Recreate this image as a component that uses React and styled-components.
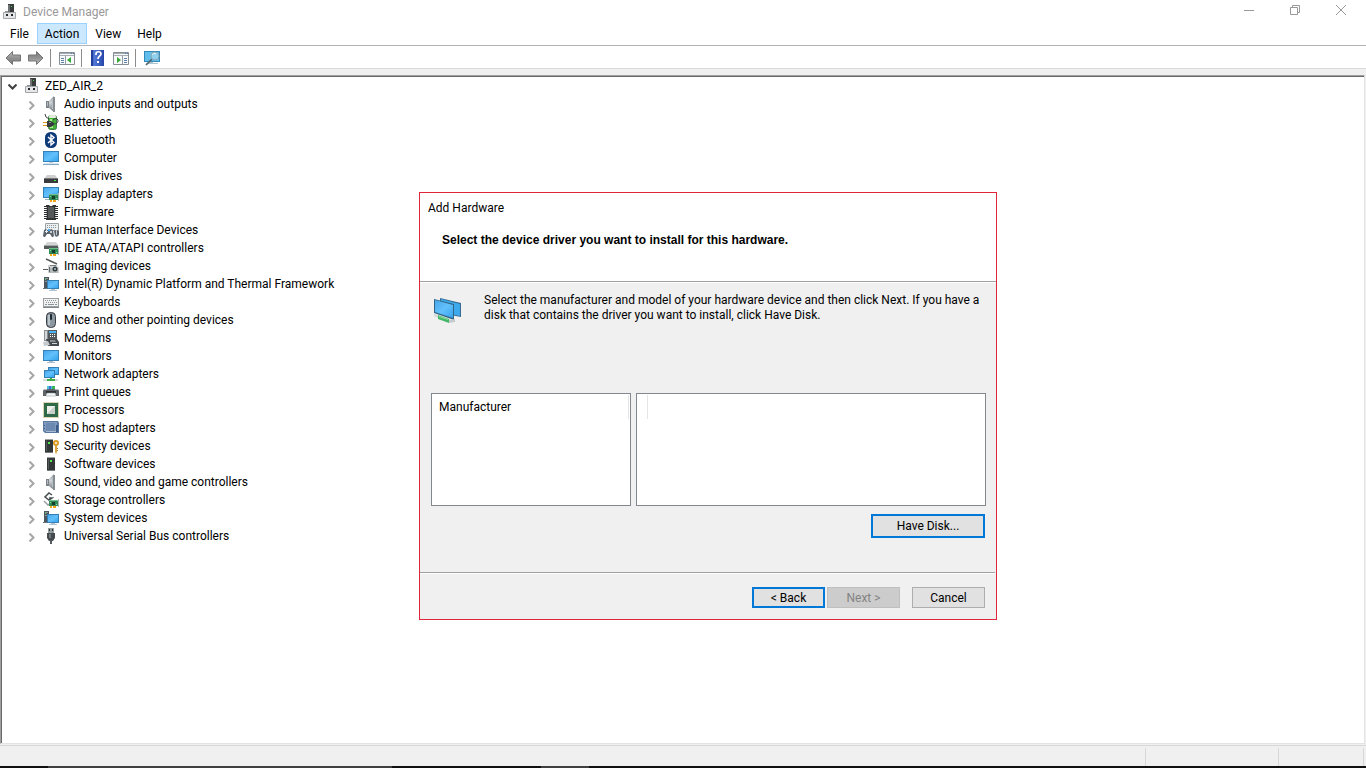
import React, { useState } from "react";
import styled, { createGlobalStyle } from "styled-components";

const GlobalStyle = createGlobalStyle`
  * {
    box-sizing: border-box;
  }

  body {
    margin: 0;
    overflow: hidden;
    background: #fff;
    color: #000;
    font-family: Roboto, "Open Sans", sans-serif;
    font-size: 12px;
    line-height: 16px;
  }

  button {
    font: inherit;
    color: inherit;
  }

  svg {
    flex: none;
  }
`;

const Window = styled.div`
  display: flex;
  flex-direction: column;
  height: 100vh;
  background: #f0f0f0;
`;

const TitleBar = styled.header`
  display: flex;
  align-items: center;
  height: 23px;
  padding-left: 3px;
  background: #fff;
`;

const WindowTitle = styled.h1`
  flex: 1;
  margin: 0 0 0 5px;
  font-size: 12px;
  font-weight: 400;
  color: #999;
`;

const CaptionButton = styled.button`
  display: flex;
  align-items: center;
  justify-content: center;
  width: 46px;
  height: 20px;
  padding: 0;
  border: none;
  background: none;
`;

const CaptionButtons = styled.div`
  display: flex;
  align-self: flex-start;
  margin-right: 2px;
`;

const MenuBar = styled.nav`
  display: flex;
  height: 23px;
  padding: 0 2px 1px;
  border-bottom: 1px solid #b2b2b5;
  background: #fff;
`;

const MenuButton = styled.button`
  padding: 0 7px;
  border: 1px solid ${(props) => (props.$active ? "#99d1ff" : "transparent")};
  background: ${(props) => (props.$active ? "#cce8ff" : "none")};
  line-height: 20px;
`;

const ToolBar = styled.div`
  display: flex;
  align-items: center;
  height: 23px;
  padding: 1px 0 0 1px;
  border-bottom: 1px solid #dadada;
  background: #fff;
`;

const ToolButton = styled.button`
  display: flex;
  align-items: center;
  justify-content: center;
  width: 23px;
  height: 20px;
  padding: 0;
  border: none;
  background: none;
`;

const ToolDivider = styled.span`
  width: 1px;
  height: 18px;
  margin: 0 4px 0 3px;
  background: #8d8d8d;
`;

const TreePane = styled.main`
  flex: 1;
  min-height: 0;
  margin: 6px 1px 1px 0;
  border: 1px solid #e3e3e3;
  border-top-color: #a0a0a0;
  border-left-color: #a0a0a0;
  background: #fff;
  box-shadow: inset 1px 1px 0 #696969;
`;

const Tree = styled.ul`
  margin: 0;
  padding: 1px 0 0;
  list-style: none;
`;

const Branch = styled.ul`
  margin: 0;
  padding: 0 0 0 20px;
  list-style: none;
`;

const TreeRow = styled.div`
  display: flex;
  align-items: center;
  height: 18px;
`;

const Toggle = styled.button`
  display: flex;
  align-items: center;
  justify-content: ${(props) => (props.$root ? "flex-start" : "center")};
  width: ${(props) => (props.$root ? "24px" : "22px")};
  height: 18px;
  padding: ${(props) => (props.$root ? "2px 0 0 7px" : "2px 0 0")};
  border: none;
  background: none;
`;

const RowLabel = styled.span`
  margin-left: 5px;
  white-space: nowrap;
`;

const StatusBar = styled.footer`
  display: flex;
  height: 21px;
  padding: 2px 2px 0 0;
  border-top: 1px solid #d7d7d7;
`;

const StatusCell = styled.div`
  flex: ${(props) => (props.$width ? "none" : "1")};
  width: ${(props) => props.$width || "auto"};
  border-right: 1px solid #d7d7d7;
`;

const TaskStrip = styled.div`
  display: flex;
  height: 2px;
  background: #101010;
`;

const TaskSegment = styled.span`
  width: ${(props) => props.$width};
  background: ${(props) => (props.$lit ? "#404040" : "#101010")};
`;

const Dialog = styled.section`
  position: absolute;
  top: 192px;
  left: 419px;
  display: flex;
  flex-direction: column;
  width: 578px;
  height: 428px;
  border: 1px solid #e0263c;
  background: #f0f0f0;
`;

const DialogHeader = styled.header`
  height: 89px;
  padding: 7px 8px 0;
  border-bottom: 1px solid #a0a0a0;
  background: #fff;
  box-shadow: 0 1px 0 #fff;
`;

const DialogTitle = styled.h2`
  margin: 0;
  font-size: 12px;
  font-weight: 400;
`;

const DialogHeading = styled.h3`
  margin: 16px 14px 0;
  font-family: "Liberation Sans", Arial, sans-serif;
  font-size: 12px;
  font-weight: 700;
  line-height: 16px;
`;

const DialogBody = styled.div`
  flex: 1;
  display: flex;
  flex-direction: column;
  padding: 11px 10px 0 11px;
`;

const Intro = styled.div`
  display: flex;
  align-items: flex-start;
  gap: 20px;
  height: 100px;
  padding-left: 1px;
`;

const IntroText = styled.p`
  flex: 1;
  margin: 0;
  line-height: 15px;
  white-space: nowrap;
`;

const Lists = styled.div`
  display: grid;
  grid-template-columns: 4fr 7fr;
  gap: 5px;
  height: 113px;
`;

const ListBox = styled.div`
  padding: 1px;
  border: 1px solid #828790;
  background: #fff;
`;

const ColumnHeader = styled.div`
  width: ${(props) => props.$width || "100%"};
  height: 24px;
  padding: ${(props) => (props.$width ? "0" : "4px 6px")};
  border-right: 1px solid #e5e5e5;
`;

const DiskRow = styled.div`
  display: flex;
  justify-content: flex-end;
  padding: 8px 1px 0 0;
`;

const DialogFooter = styled.footer`
  display: flex;
  justify-content: flex-end;
  height: 47px;
  margin-right: 1px;
  padding: 14px 10px 0;
  border-top: 1px solid #a0a0a0;
  box-shadow: inset 0 1px 0 #fff;
`;

const PushButton = styled.button`
  width: ${(props) => (props.$wide ? "114px" : "73px")};
  height: ${(props) => (props.$wide ? "24px" : "21px")};
  margin-left: ${(props) => (props.$apart ? "12px" : "2px")};
  padding: 0;
  border: ${(props) => (props.$focus ? "2px solid #0078d7" : "1px solid #adadad")};
  background: #e1e1e1;
  line-height: 16px;

  &:disabled {
    border-color: #bfbfbf;
    background: #ccc;
    color: #838383;
  }
`;

const HiddenSvg = styled.svg`
  position: absolute;
`;

const Svg = ({ children }) => (
  <svg width="16" height="16" viewBox="0 0 16 16" aria-hidden="true">
    {children}
  </svg>
);

const Defs = () => (
  <HiddenSvg width="0" height="0" aria-hidden="true">
    <defs>
      <linearGradient id="screen" x1="0" y1="0" x2="1" y2="1">
        <stop offset="0" stopColor="#47a6ea" />
        <stop offset="0.5" stopColor="#62c1fb" />
        <stop offset="1" stopColor="#35a3ee" />
      </linearGradient>
      <linearGradient id="cone" x1="0" y1="0" x2="0" y2="1">
        <stop offset="0" stopColor="#8b9196" />
        <stop offset="0.4" stopColor="#d2d6d9" />
        <stop offset="1" stopColor="#6d747a" />
      </linearGradient>
      <linearGradient id="steel" x1="0" y1="0" x2="0" y2="1">
        <stop offset="0" stopColor="#bdbdbd" />
        <stop offset="0.5" stopColor="#929292" />
        <stop offset="1" stopColor="#777" />
      </linearGradient>
      <linearGradient id="help" x1="0" y1="0" x2="1" y2="0">
        <stop offset="0" stopColor="#24459f" />
        <stop offset="0.25" stopColor="#5278d7" />
        <stop offset="1" stopColor="#2744a9" />
      </linearGradient>
    </defs>
  </HiddenSvg>
);

const Card = () => (
  <>
    <path d="M6 8h9v6H6z" fill="#2f8a58" />
    <path d="M6 8h9v1H6z" fill="#6fbd8a" />
    <path d="M15 7h1v8h-1z" fill="#b1b5b5" />
    <path d="M9 10h3v3H9z" fill="#173d2b" />
    <path d="M7 10h1v1H7zM13 12h1v1h-1z" fill="#8bd3a0" />
    <path d="M7 14h2v2H7zM10 14h3v2h-3z" fill="#f2a51c" />
  </>
);

const Speaker = () => (
  <Svg>
    <path d="M3 5h3v7H3z" fill="#7b8288" />
    <path d="M4 6h1v4H4z" fill="#b3b9be" />
    <path d="M6 5 11 0v16l-5-4z" fill="url(#cone)" />
    <path d="M10 1h2v15h-2z" fill="#868d93" />
    <path d="M9 3h1v10H9z" fill="#b9c0c5" />
  </Svg>
);

const Battery = () => (
  <Svg>
    <rect x="5.5" y="1.5" width="8" height="14" rx="2" fill="#3fb035" stroke="#3c7a41" />
    <path d="M6 2c1-2 6-2 7 0v2H6z" fill="#e3ebdd" />
    <path d="M7 5h2v3H7zM7 12h3v2H7z" fill="#a8ee90" />
    <path d="m2 0 1 3 3 2" fill="none" stroke="#444" />
    <path d="M0 8.5h5M0 11.5h5" stroke="#d39a20" strokeWidth="1.2" />
    <path d="M4 7h4l3 2v2l-3 2H4z" fill="#353b3c" />
    <path d="M6 8h2v1H6z" fill="#8a9092" />
    <path d="M10 10c4 0 5-1 5-4l-2-2-3 2" fill="none" stroke="#3a4340" />
  </Svg>
);

const BluetoothIcon = () => (
  <Svg>
    <rect x="2" y="0" width="12" height="16" rx="5.5" fill="#0f3a78" />
    <path d="m5 5 6 5.5L8 13V3l3 2.5L5 11" fill="none" stroke="#fff" strokeWidth="1.4" />
  </Svg>
);

const ComputerIcon = () => (
  <Svg>
    <path d="M0 1h16v11H0z" fill="#3583b8" />
    <path d="M1 2h14v9H1z" fill="url(#screen)" />
    <path d="M6 12h4v1H6z" fill="#c9d2d8" />
    <path d="M1 13h14v1H1z" fill="#d8e5ec" />
    <path d="M0 14h16v1H0z" fill="#7fa9c4" />
  </Svg>
);

const MonitorIcon = () => (
  <Svg>
    <path d="M0 2h16v11H0z" fill="#3583b8" />
    <path d="M1 3h14v9H1z" fill="url(#screen)" />
    <path d="M6 13h4v1H6zM4 14h8v1H4z" fill="#a9bdca" />
  </Svg>
);

const Disk = () => (
  <Svg>
    <path d="M4 7h8l3 4H1z" fill="#cfcfcf" />
    <path d="M1 10h14v5H1z" fill="#373b3d" />
    <path d="M1 10h14v1H1z" fill="#777" />
    <path d="M11 12h2v1h-2z" fill="#39ed4b" />
  </Svg>
);

const DisplayCard = () => (
  <Svg>
    <path d="M0 1h16v11H0z" fill="#347fb3" />
    <path d="M1 2h14v9H1z" fill="url(#screen)" />
    <path d="M2 13h5v1H2z" fill="#9eb6c2" />
    <Card />
  </Svg>
);

const Firmware = () => (
  <Svg>
    <path d="M3 1h3l1 1h2l1-1h3v15H3z" fill="#303333" />
    <path d="M5 3h6v11H5z" fill="#555959" />
    <path
      d="M1 2.5h3M1 4.5h3M1 6.5h3M1 8.5h3M1 10.5h3M1 12.5h3M1 14.5h3M12 2.5h3M12 4.5h3M12 6.5h3M12 8.5h3M12 10.5h3M12 12.5h3M12 14.5h3"
      stroke="#2c2f2f"
    />
    <path d="M3.5 3v12M12.5 3v12" stroke="#c4c4c4" strokeDasharray="1 1" />
  </Svg>
);

const Hid = () => (
  <Svg>
    <path d="M2.5 1.5h13v7h-13z" fill="#eceff0" stroke="#9ba2a6" />
    <path d="M4 3.5h10M4 5.5h10" stroke="#8d969b" strokeDasharray="1 1" />
    <path d="M0 14 1 8l2-1 1 1h3l1-1 2 1 1 6-1 1H9l-2-3H4l-2 3H1z" fill="#5b646b" />
    <path d="M2 9.5h3M3.5 8v3" stroke="#e4edf1" />
    <path d="M5 7h2v2H5z" fill="#45a9f0" />
    <circle cx="8" cy="10" r="1" fill="#e8eef1" />
    <path d="M11 9q2-2 5 0v4q-2 3-4 1z" fill="#59636a" />
    <path d="M13.5 8v5" stroke="#c1c9ce" />
  </Svg>
);

const Ide = () => (
  <Svg>
    <path d="M4 2h9l3 4H1z" fill="#d4d4d4" />
    <path d="M1 5h14v4H1z" fill="#555a5b" />
    <path d="M1 5h14v1H1z" fill="#a5a9a9" />
    <Card />
  </Svg>
);

const Imaging = () => (
  <Svg>
    <path d="m3 1 11 5" stroke="#545858" strokeWidth="1.5" />
    <path d="M5 7h9l2 3v5H5z" fill="#cfd3d4" />
    <path d="M0 11h5v1H0z" fill="#595f61" />
    <path d="M7 7h6v1H7z" fill="#767d7f" />
    <path d="M6 10h9v5H6z" fill="#b4babc" />
    <circle cx="12" cy="11" r="2.5" fill="#34393b" />
    <circle cx="12" cy="11" r="1" fill="#9fc4d4" />
    <path d="M6 9h1v5H6z" fill="#5d6668" />
  </Svg>
);

const Tower = () => (
  <Svg>
    <path d="M1 1h5v12H1z" fill="#4b565c" />
    <path d="M2 2h3v1H2zM2 5h2v1H2z" fill="#8d989e" />
    <path d="M2 3h1v1H2z" fill="#4ddf58" />
    <path d="M0 12h5v1H0z" fill="#68757b" />
    <path d="M4 4h12v9H4z" fill="#347fb3" />
    <path d="M5 5h10v7H5z" fill="url(#screen)" />
    <path d="M8 13h4v1H8zM6 14h8v1H6z" fill="#b1c5d0" />
  </Svg>
);

const KeyboardIcon = () => (
  <Svg>
    <path d="M0 4h16v9H0z" fill="#9ba0a3" />
    <path d="M1 5h14v7H1z" fill="#f1f3f3" />
    <path d="M2 6.5h12M3 8.5h11" stroke="#8b9295" strokeDasharray="1 1" />
    <path d="M2 10.5h2M5 10.5h6M12 10.5h2" stroke="#8b9295" />
    <path d="M0 13h16v1H0z" fill="#83898c" />
  </Svg>
);

const MouseIcon = () => (
  <Svg>
    <rect x="3.5" y=".5" width="9" height="15" rx="4" fill="#8d97a0" stroke="#363d43" />
    <path d="M5 3h2v10H5z" fill="#bac4cb" />
    <path d="M8 1v6" stroke="#525d66" />
    <rect x="7" y="2" width="2" height="6" rx="1" fill="#202a33" />
  </Svg>
);

const ModemIcon = () => (
  <Svg>
    <path d="M5 0h9v10H4z" fill="#51595d" />
    <path d="M1 0h4v11H1z" fill="#888d90" />
    <path d="M2 1h2v9H2z" fill="#d5d8da" />
    <path d="M6 1h7v2H6z" fill="#49b3f3" />
    <path d="M7 4.5h6M7 6.5h6" stroke="#fff" strokeDasharray="1 1" />
    <path d="M3 9h11l2 3v4H5z" fill="#444a4d" />
    <path d="m0 12 5-1 2 4-6 1z" fill="#c4c9cb" />
    <path d="M7 10h5l1 2H7z" fill="#858c8f" />
    <path d="M9 13h5v1H9z" fill="#d0d5d7" />
  </Svg>
);

const NetworkIcon = () => (
  <Svg>
    <path d="M5 1h11v8H5z" fill="#347fb3" />
    <path d="M6 2h9v6H6z" fill="url(#screen)" />
    <path d="M1 4h11v8H1z" fill="#347fb3" />
    <path d="M2 5h9v6H2z" fill="url(#screen)" />
    <path d="M7 12h2v1H7zM4 13h8v2H4z" fill="#3fac44" />
    <path d="M0 13h4v2H0zM12 13h3v2h-3z" fill="#d5dcd9" />
  </Svg>
);

const PrinterIcon = () => (
  <Svg>
    <path d="M4 2h8v4H4z" fill="#52c1df" />
    <path d="M6 2h2v3H6z" fill="#356edb" />
    <path d="M9 2h3v3H9z" fill="#35b85a" />
    <path d="M1 5h14l1 2v5h-3l-1-3H4l-1 3H0V7z" fill="#5d6367" />
    <path d="M1 5h3v1H1zM12 5h3v1h-3z" fill="#b5bbbd" />
    <path d="M3 7h10v2H3z" fill="#2c3338" />
    <path d="m4 9-1 3h10l-1-3z" fill="#f4f6f6" stroke="#8d989d" strokeWidth=".5" />
  </Svg>
);

const ProcessorIcon = () => (
  <Svg>
    <rect x=".5" y=".5" width="15" height="15" fill="none" stroke="#b9aa69" strokeDasharray="1 1" />
    <path d="M1 1h14v14H1z" fill="#2f6a48" />
    <path d="M4 4h8v8H4z" fill="#eceeea" />
    <path d="m4 12 8-8v8z" fill="#c9cfca" />
  </Svg>
);

const SdIcon = () => (
  <Svg>
    <path d="M0 1h15l1 2v10H2l-2-2z" fill="#5b79a0" />
    <path d="M1 2h13v9H1z" fill="#7f9abd" />
    <path d="M3 3h9v8H3z" fill="#6b89b1" />
    <path d="M1 5h1v1H1zM1 8h1v1H1zM13 5h2v7h-2z" fill="#3c5c87" />
    <path d="M3 11h10v1H3z" fill="#a8bad0" />
  </Svg>
);

const Server = () => (
  <>
    <path d="M5 1h6l1 1v12H4V2z" fill="#333738" />
    <path d="M5 1h6l1 1H4z" fill="#9da3a5" />
    <path d="M4 14h8v1H4z" fill="#777d7e" />
    <path d="M5 3h1v10H5z" fill="#565b5c" />
    <path d="M7 4h2v2H7z" fill="#51e852" />
  </>
);

const ServerIcon = () => (
  <Svg>
    <Server />
  </Svg>
);

const SecurityIcon = () => (
  <Svg>
    <g transform="translate(-2 0)">
      <Server />
    </g>
    <circle cx="13" cy="5" r="2" fill="none" stroke="#d99922" strokeWidth="2" />
    <path d="M12 7h2v7l-1 2-1-2z" fill="#daa53d" />
    <path d="M14 10.5h1M14 12.5h1" stroke="#a87820" />
  </Svg>
);

const StorageIcon = () => (
  <Svg>
    <path d="M9 3 6 1 2 5l4 3 3-2H6" fill="none" stroke="#484f51" strokeWidth="1.5" />
    <path d="m1 9 4 4 2-1" fill="none" stroke="#9ca4a7" strokeWidth="1.5" />
    <Card />
  </Svg>
);

const UsbIcon = () => (
  <Svg>
    <path d="M5 0h6v5H5z" fill="#969d9e" />
    <path d="M6 1h1v2H6zM9 1h1v2H9z" fill="#2c3133" />
    <path d="M4 5h8v5l-2 3H6l-2-3z" fill="#454b4e" />
    <path d="M6 6h2v4H6z" fill="#737b7e" />
    <path d="M7 12h2v4H7z" fill="#52595c" />
  </Svg>
);

const ComputerRoot = () => (
  <svg width="15" height="16" viewBox="0 0 15 16" aria-hidden="true">
    <path d="M5 0h6v8H5z" fill="#3a3d3e" />
    <path d="M5 1h2v7H5z" fill="#6e7274" />
    <path d="M8 2h1v1H8z" fill="#45e645" />
    <path d="M2 7h3v2H2zM8 8h3v1H8z" fill="#8d9193" />
    <path d="M.5 8.5h12v6H.5z" fill="#e4e6e7" stroke="#a2a6a8" />
    <path d="M3 10h2v2H3zM8 10h2v2H8z" fill="#25282a" />
  </svg>
);

const Arrow = ({ forward }) => (
  <Svg>
    <path
      d="M1 8 7.5 1.5V5h8v6h-8v3.500z"
      fill="url(#steel)"
      stroke="#747474"
      transform={forward ? "rotate(180 8 8)" : undefined}
    />
  </Svg>
);

const PanelIcon = ({ right }) => (
  <Svg>
    <path d="M.5 2.5h15v12H.5z" fill="#f8f9fb" stroke="#858d95" />
    <path d="M1 3h14v1H1z" fill="#a4abb1" />
    <path d="M12 3h1v1h-1zM14 3h1v1h-1z" fill="#4c7dae" />
    <path d="M1 5.5h14" stroke="#a7adb2" />
    <g transform={right ? "translate(16 0) scale(-1 1)" : undefined}>
      <path d="M2 8.5h3M2 10.5h3M2 12.5h3" stroke="#5b7f9f" />
      <path d="M6.500 6v8" stroke="#919ba4" />
      <path d="m8 10 4-3v6z" fill="#35a934" />
    </g>
  </Svg>
);

const HelpIcon = () => (
  <Svg>
    <path d="M1 0h13v16H1z" fill="url(#help)" />
    <path d="M1 0h2v16H1z" fill="#233f9b" />
    <path d="M6 5V4c0-3 5-3 5 0 0 2-3 2-3 5" fill="none" stroke="#fff" strokeWidth="1.7" />
    <path d="M7 11h2v2H7z" fill="#fff" />
  </Svg>
);

const ScanIcon = () => (
  <Svg>
    <path d="M0 1h16v11H0z" fill="#3389b8" />
    <path d="M1 2h14v9H1z" fill="#60bdec" />
    <path d="M4 12h5v1H4zM2 13h12v1H2z" fill="#afc4cf" />
    <path d="m2 15 6-6" stroke="#51666f" strokeWidth="1.7" />
    <circle cx="11" cy="6" r="4" fill="#8fd0ee" stroke="#8ba5b2" />
    <path d="M8 5c1-2 3-2 4-1" fill="none" stroke="#e1f5fc" />
  </Svg>
);

const HardwareIcon = () => (
  <svg width="32" height="32" viewBox="0 0 32 32" aria-hidden="true">
    <path d="m8 5 21 5v14L8 20z" fill="#386b8f" />
    <path d="m9 6 19 5v12L9 19z" fill="#3ba9eb" />
    <path d="m2 6 20 5v16L2 20z" fill="#326685" />
    <path d="m3 7 18 5v13L3 19z" fill="url(#screen)" />
    <path d="m2 21 4 1v3l-4-2z" fill="#d4dada" />
    <path d="m6 22 11 4v4L6 26z" fill="#43b766" />
    <path d="m7 23 9 3v1l-9-3z" fill="#8ee09d" />
    <path d="m17 27 6-1v3l-6 1z" fill="#c3cccc" />
  </svg>
);

const devices = [
  ["Audio inputs and outputs", <Speaker />],
  ["Batteries", <Battery />],
  ["Bluetooth", <BluetoothIcon />],
  ["Computer", <ComputerIcon />],
  ["Disk drives", <Disk />],
  ["Display adapters", <DisplayCard />],
  ["Firmware", <Firmware />],
  ["Human Interface Devices", <Hid />],
  ["IDE ATA/ATAPI controllers", <Ide />],
  ["Imaging devices", <Imaging />],
  ["Intel(R) Dynamic Platform and Thermal Framework", <Tower />],
  ["Keyboards", <KeyboardIcon />],
  ["Mice and other pointing devices", <MouseIcon />],
  ["Modems", <ModemIcon />],
  ["Monitors", <MonitorIcon />],
  ["Network adapters", <NetworkIcon />],
  ["Print queues", <PrinterIcon />],
  ["Processors", <ProcessorIcon />],
  ["SD host adapters", <SdIcon />],
  ["Security devices", <SecurityIcon />],
  ["Software devices", <ServerIcon />],
  ["Sound, video and game controllers", <Speaker />],
  ["Storage controllers", <StorageIcon />],
  ["System devices", <Tower />],
  ["Universal Serial Bus controllers", <UsbIcon />],
];

const App = () => {
  const [open, setOpen] = useState(true);
  const [menu, setMenu] = useState("Action");

  return (
    <Window>
      <GlobalStyle />
      <Defs />
      <TitleBar>
        <ComputerRoot />
        <WindowTitle>Device Manager</WindowTitle>
        <CaptionButtons>
          <CaptionButton aria-label="Minimize">
            <svg width="10" height="10">
              <path d="M0 5.5h10" stroke="#999" />
            </svg>
          </CaptionButton>
          <CaptionButton aria-label="Restore">
            <svg width="10" height="10" fill="none" stroke="#999">
              <path d="M.5 2.5h7v7h-7zM2.5 2V.5h7v7H8" />
            </svg>
          </CaptionButton>
          <CaptionButton aria-label="Close">
            <svg width="10" height="10">
              <path d="m0 0 10 10M10 0 0 10" stroke="#999" />
            </svg>
          </CaptionButton>
        </CaptionButtons>
      </TitleBar>

      <MenuBar>
        {["File", "Action", "View", "Help"].map((name) => (
          <MenuButton key={name} $active={menu === name} onClick={() => setMenu(name)}>
            {name}
          </MenuButton>
        ))}
      </MenuBar>

      <ToolBar>
        <ToolButton aria-label="Back"><Arrow /></ToolButton>
        <ToolButton aria-label="Forward"><Arrow forward /></ToolButton>
        <ToolDivider />
        <ToolButton aria-label="Show console tree"><PanelIcon /></ToolButton>
        <ToolDivider />
        <ToolButton aria-label="Help"><HelpIcon /></ToolButton>
        <ToolButton aria-label="Show action pane"><PanelIcon right /></ToolButton>
        <ToolDivider />
        <ToolButton aria-label="Scan for hardware changes"><ScanIcon /></ToolButton>
      </ToolBar>

      <TreePane>
        <Tree>
          <li>
            <TreeRow>
              <Toggle $root aria-label="Collapse ZED_AIR_2" onClick={() => setOpen(!open)}>
                <svg width="9" height="6">
                  <path d="m.5.5 4 4 4-4" fill="none" stroke="#404040" strokeWidth="2" />
                </svg>
              </Toggle>
              <ComputerRoot />
              <RowLabel>ZED_AIR_2</RowLabel>
            </TreeRow>
            {open && (
              <Branch>
                {devices.map(([name, icon]) => (
                  <li key={name}>
                    <TreeRow>
                      <Toggle aria-label={`Expand ${name}`}>
                        <svg width="6" height="9">
                          <path d="m.5.5 4 4-4 4" fill="none" stroke="#a6a6a6" strokeWidth="2" />
                        </svg>
                      </Toggle>
                      {icon}
                      <RowLabel>{name}</RowLabel>
                    </TreeRow>
                  </li>
                ))}
              </Branch>
            )}
          </li>
        </Tree>
      </TreePane>

      <StatusBar>
        <StatusCell />
        <StatusCell $width="133px" />
        <StatusCell $width="85px" />
      </StatusBar>
      <TaskStrip>
        <TaskSegment $width="48px" />
        <TaskSegment $width="344px" $lit />
        <TaskSegment $width="149px" />
        <TaskSegment $width="48px" $lit />
      </TaskStrip>

      <Dialog role="dialog" aria-labelledby="dialog-title">
        <DialogHeader>
          <DialogTitle id="dialog-title">Add Hardware</DialogTitle>
          <DialogHeading>Select the device driver you want to install for this hardware.</DialogHeading>
        </DialogHeader>
        <DialogBody>
          <Intro>
            <HardwareIcon />
            <IntroText>
              Select the manufacturer and model of your hardware device and then click Next. If you have a
              <br />
              disk that contains the driver you want to install, click Have Disk.
            </IntroText>
          </Intro>
          <Lists>
            <ListBox>
              <ColumnHeader>Manufacturer</ColumnHeader>
            </ListBox>
            <ListBox>
              <ColumnHeader $width="10px" />
            </ListBox>
          </Lists>
          <DiskRow>
            <PushButton $wide $focus>Have Disk...</PushButton>
          </DiskRow>
        </DialogBody>
        <DialogFooter>
          <PushButton $focus>&lt; Back</PushButton>
          <PushButton disabled>Next &gt;</PushButton>
          <PushButton $apart>Cancel</PushButton>
        </DialogFooter>
      </Dialog>
    </Window>
  );
};

export default App;
